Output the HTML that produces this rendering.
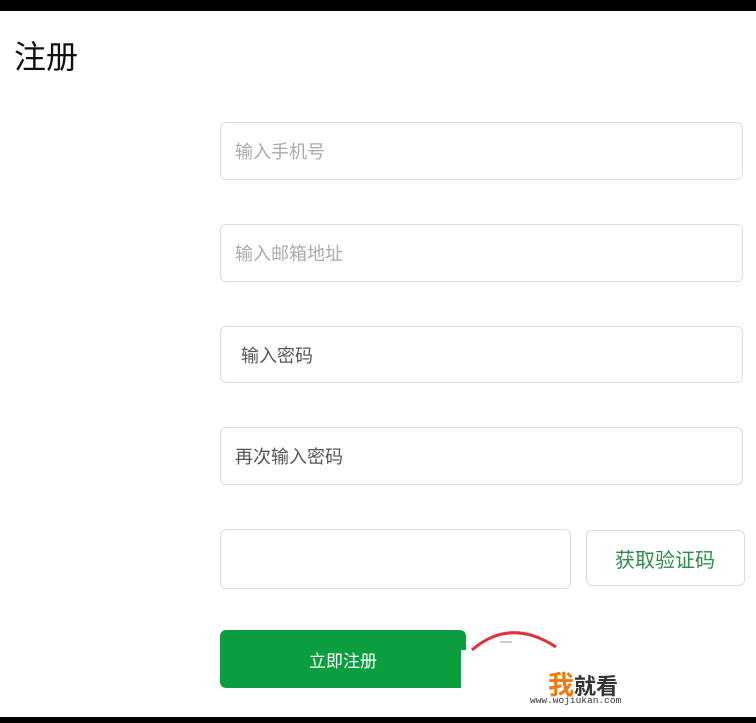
<!DOCTYPE html>
<html><head><meta charset="utf-8"><style>
body{margin:0;width:756px;height:723px;background:#fff;position:relative;overflow:hidden;font-family:"Liberation Sans","Noto Sans CJK SC",sans-serif}
.bar{position:absolute;left:0;width:756px;background:#000}
.in{position:absolute;box-sizing:border-box;border:1.5px solid #ddd;border-radius:6px;background:#fff;font-size:18px;color:#aaa;display:flex;align-items:center;padding-left:14px}
</style></head><body>
<div class="bar" style="top:0;height:11px"></div>
<div class="bar" style="top:717px;height:6px"></div>
<div style="position:absolute;left:14px;top:32px;font-size:32px;color:#111">注册</div>
<div class="in" style="left:220px;top:122px;width:523px;height:58px">输入手机号</div>
<div class="in" style="left:220px;top:224px;width:523px;height:58px">输入邮箱地址</div>
<div class="in" style="left:220px;top:326px;width:523px;height:57px;color:#555;padding-left:20px">输入密码</div>
<div class="in" style="left:220px;top:427px;width:523px;height:58px;color:#555">再次输入密码</div>
<div class="in" style="left:220px;top:529px;width:351px;height:60px"></div>
<div class="in" style="left:586px;top:530px;width:159px;height:56px;color:#2e8b4a;font-size:20px;padding-left:28px">获取验证码</div>
<div style="position:absolute;left:220px;top:630px;width:246px;height:58px;background:#0a9e3f;border-radius:6px;color:#fff;font-size:17px;display:flex;align-items:center;justify-content:center">立即注册</div>
<div style="position:absolute;left:461px;top:650px;width:10px;height:45px;background:#fff"></div>
<svg style="position:absolute;left:460px;top:625px" width="110" height="40"><path d="M12 25 Q50 -8 96 22" stroke="#e0323a" stroke-width="3" fill="none"/><path d="M40 17 H52" stroke="#bbb" stroke-width="1.5"/></svg>
<div style="position:absolute;left:548px;top:670px;font-size:26px;font-weight:bold;color:#f07a10;line-height:30px">我<span style="color:#333;font-size:22px;font-weight:bold">就看</span></div>
<div style="position:absolute;left:530px;top:695px;font-size:9.5px;font-family:'Liberation Mono',monospace;color:#333">www.wojiukan.com</div>
</body></html>
